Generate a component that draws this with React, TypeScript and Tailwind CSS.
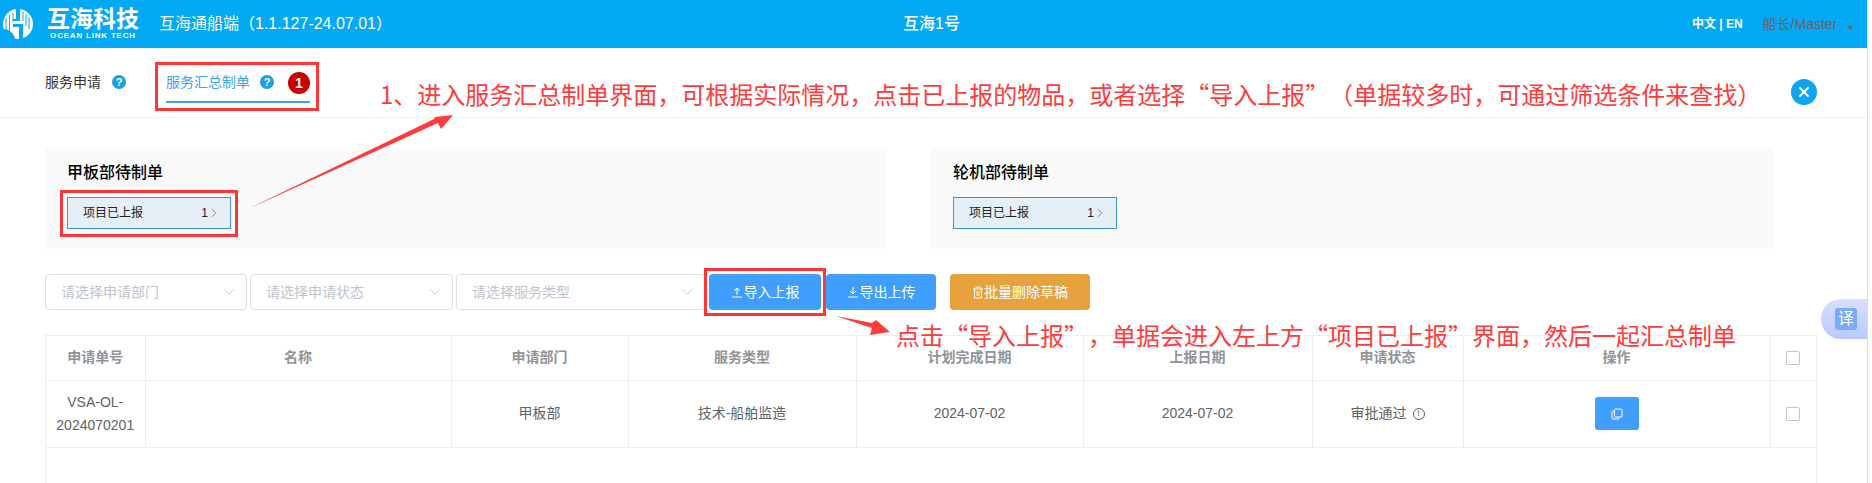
import { ChevronDown, ChevronRight, X } from "lucide-react";

const rows = ["申请单号", "名称", "申请部门", "服务类型", "计划完成日期", "上报日期", "申请状态", "操作"];

function Help() {
  return (
    <span className="flex h-[14px] w-[14px] items-center justify-center rounded-full bg-[#1a9fe8] text-[11px] font-bold leading-none text-white">
      ?
    </span>
  );
}

function Select({ label, width }: { label: string; width: string }) {
  return (
    <div className={`flex h-[36px] items-center justify-between rounded-[4px] border border-[#dcdfe6] pl-[15px] pr-[8px] text-[14px] text-[#c0c4cc] ${width}`}>
      <span>{label}</span>
      <ChevronDown size={18} strokeWidth={1.1} className="text-[#c0c4cc]" />
    </div>
  );
}

function Pending({ title, width }: { title: string; width: string }) {
  return (
    <section className={`h-[101px] bg-[#fafafa] px-[22px] pt-[14px] ${width}`}>
      <h3 className="text-[16px] font-medium leading-[22px] text-black">{title}</h3>
      <div className="mt-[13px] flex h-[32px] w-[164px] items-center justify-between border border-[#3a95dc] bg-[#e4eff8] pl-[15px] pr-[9px] text-[12px] text-[#222]">
        <span>项目已上报</span>
        <span className="flex items-center">
          1<ChevronRight size={14} strokeWidth={1.2} className="-ml-[1px] text-[#555]" />
        </span>
      </div>
    </section>
  );
}

function Check() {
  return <span className="mx-auto block h-[14px] w-[14px] rounded-[2px] border border-[#c0c4cc] bg-white" />;
}

function Logo() {
  return (
    <svg width="32" height="32" viewBox="0 0 32 32" className="ml-[2px] shrink-0">
      <circle cx="16" cy="16" r="15" fill="#fff" />
      <path d="M4 10v12M7.500 7v18M11 5v9" stroke="#03a9f4" strokeWidth="1" fill="none" />
      <path d="M21 4v9M24 6v12M27 9v12" stroke="#03a9f4" strokeWidth="1" fill="none" />
      <path d="M14 1h4v12h-7v-2h3zM11 16h10v15h-4V19h-6z" fill="#03a9f4" />
      <path d="M1 21c5 0 10 3 12 9l-4 1c-4-2-7-6-8-10z" fill="#03a9f4" />
    </svg>
  );
}

export default function App() {
  return (
    <div className="relative flex h-[483px] w-full overflow-hidden bg-white font-['Liberation_Sans','Noto_Sans_CJK_SC',sans-serif]">
      <main className="flex w-[1867px] shrink-0 flex-col">
        <header className="flex h-[48px] shrink-0 items-center whitespace-nowrap bg-[#03a9f4] text-white">
          <Logo />
          <div className="ml-[13px] flex w-[92px] shrink-0 flex-col items-center">
            <span className="text-[23px] font-bold leading-[24px]">互海科技</span>
            <span className="text-[8px] font-bold leading-[10px] tracking-[0.8px]">OCEAN LINK TECH</span>
          </div>
          <span className="ml-[20px] shrink-0 text-[16px]">互海通船端（1.1.127-24.07.01）</span>
          <span className="ml-[511px] shrink-0 text-[16px] font-medium">互海1号</span>
          <span className="ml-[732px] shrink-0 text-[12px] font-bold">中文 | EN</span>
          <span className="ml-[20px] shrink-0 text-[14px] text-[#666]">船长/Master</span>
          <span className="ml-[10px] mt-[8px] h-0 w-0 border-x-[3.500px] border-t-[4px] border-x-transparent border-t-[#666]" />
        </header>

        <nav className="flex h-[70px] shrink-0 items-start border-b border-[#eeeeee] pl-[45px] text-[14px]">
          <div className="flex items-center gap-[11px] pt-[22px] leading-[24px] text-[#333]">
            服务申请 <Help />
          </div>
          <div className="ml-[40px] flex h-[55px] w-[144px] items-start gap-[10px] border-b-2 border-[#409eff] pt-[22px] leading-[24px] text-[#409eff]">
            服务汇总制单
            <span className="mt-[5px]"><Help /></span>
          </div>
        </nav>

        <div className="mt-[30px] flex gap-[44px] pl-[45px]">
          <Pending title="甲板部待制单" width="w-[842px]" />
          <Pending title="轮机部待制单" width="w-[842px]" />
        </div>

        <div className="mt-[25px] flex items-center pl-[45px] text-[14px]">
          <Select label="请选择申请部门" width="w-[202px]" />
          <div className="ml-[3px]"><Select label="请选择申请状态" width="w-[203px]" /></div>
          <div className="ml-[3px]"><Select label="请选择服务类型" width="w-[249px]" /></div>
          <button className="ml-[4px] flex h-[36px] w-[112px] items-center justify-center gap-[1px] rounded-[4px] bg-[#409eff] text-white">
            <svg width="12" height="12" viewBox="0 0 12 12" fill="none" stroke="currentColor"><path d="M6 9V2M3 5l3-3 3 3M1 11h10" /></svg>
            导入上报
          </button>
          <button className="ml-[5px] flex h-[36px] w-[110px] items-center justify-center gap-[1px] rounded-[4px] bg-[#409eff] text-white">
            <svg width="12" height="12" viewBox="0 0 12 12" fill="none" stroke="currentColor"><path d="M6 1v7M3 5l3 3 3-3M1 11h10" /></svg>
            导出上传
          </button>
          <button className="ml-[14px] flex h-[36px] w-[140px] items-center justify-center rounded-[4px] bg-[#e6a23c] text-white">
            <svg width="12" height="13" viewBox="0 0 12 13" fill="none" stroke="currentColor"><path d="M1 3h10M4 3V1h4v2M2.500 3v9h7V3M5 5v5M7 5v5" /></svg>
            批量删除草稿
          </button>
        </div>

        <div className="ml-[45px] mt-[25px] h-[148px] w-[1772px] border-x border-t border-[#ebeef5]">
          <table className="w-full table-fixed border-collapse text-center text-[14px]">
            <colgroup>
              <col className="w-[99px]" />
              <col className="w-[306px]" />
              <col className="w-[177px]" />
              <col className="w-[228px]" />
              <col className="w-[227px]" />
              <col className="w-[229px]" />
              <col className="w-[151px]" />
              <col className="w-[307px]" />
              <col />
            </colgroup>
            <thead>
              <tr className="h-[44px] border-b border-[#ebeef5] font-bold text-[#909399]">
                {rows.map((r) => (
                  <th key={r} className="border-r border-[#ebeef5] font-bold">{r}</th>
                ))}
                <th><Check /></th>
              </tr>
            </thead>
            <tbody className="text-[#606266]">
              <tr className="h-[67px] border-b border-[#ebeef5]">
                <td className="border-r border-[#ebeef5] leading-[23px]">VSA-OL-<br />2024070201</td>
                <td className="border-r border-[#ebeef5]" />
                <td className="border-r border-[#ebeef5]">甲板部</td>
                <td className="border-r border-[#ebeef5]">技术-船舶监造</td>
                <td className="border-r border-[#ebeef5]">2024-07-02</td>
                <td className="border-r border-[#ebeef5]">2024-07-02</td>
                <td className="border-r border-[#ebeef5]">
                  <span className="inline-flex items-center gap-[6px]">
                    审批通过
                    <span className="flex h-[12px] w-[12px] items-center justify-center rounded-full border border-[#606266] text-[9px] leading-none">!</span>
                  </span>
                </td>
                <td className="border-r border-[#ebeef5]">
                  <button className="mx-auto flex h-[33px] w-[44px] items-center justify-center rounded-[3px] bg-[#409eff]">
                    <svg width="12" height="12" viewBox="0 0 12 12" fill="none" stroke="#fff"><rect x="3.500" y="1" width="7.500" height="8" rx="1" /><path d="M3.500 3H2a1 1 0 0 0-1 1v6a1 1 0 0 0 1 1h5a1 1 0 0 0 1-1V9" /></svg>
                  </button>
                </td>
                <td><Check /></td>
              </tr>
            </tbody>
          </table>
        </div>
      </main>

      <div className="h-full w-[5px] border-l border-[#dddddd]" />

      {/* annotations drawn over the page */}
      <div className="absolute left-[155px] top-[62px] h-[49px] w-[164px] border-[3px] border-[#ff3636]" />
      <span className="absolute left-[288px] top-[72px] flex h-[22px] w-[22px] items-center justify-center rounded-full bg-[#c80000] text-[14px] font-bold text-white">1</span>
      <div className="absolute left-[60px] top-[190px] h-[47px] w-[178px] border-[3px] border-[#ff3636]" />
      <div className="absolute left-[704px] top-[268px] h-[48px] w-[122px] border-[3px] border-[#ff3636]" />
      <p className="absolute left-[380px] top-[76px] whitespace-nowrap font-['Noto_Sans_CJK_SC',sans-serif] text-[24px] leading-[36px] text-[#ff3b3b] [text-spacing-trim:space-all]">
        1、进入服务汇总制单界面，可根据实际情况，点击已上报的物品，或者选择“导入上报”（单据较多时，可通过筛选条件来查找）
      </p>
      <p className="absolute left-[896px] top-[317px] whitespace-nowrap font-['Noto_Sans_CJK_SC',sans-serif] text-[24px] leading-[36px] text-[#ff3b3b] [text-spacing-trim:space-all]">
        点击“导入上报”，单据会进入左上方“项目已上报”界面，然后一起汇总制单
      </p>
      <svg className="absolute left-0 top-0" width="1872" height="483" fill="#ff3b3b">
        <path d="M250 208 434 119 435 117 453 115 441 129 438 123z" />
        <path d="M836 316 872 323 876 320 890 332 870 335 872 328z" />
      </svg>
      <span className="absolute left-[1791px] top-[79px] flex h-[26px] w-[26px] items-center justify-center rounded-full bg-[#0ea5ee] text-white">
        <X size={16} strokeWidth={3} />
      </span>
      <div className="absolute left-[1821px] top-[299px] flex h-[40px] w-[46px] items-center rounded-l-[20px] bg-gradient-to-b from-[#d9deff] to-[#b9c9ff] pl-[14px]">
        <span className="flex h-[22px] w-[22px] items-center justify-center rounded-[3px] bg-[#7baaf7] text-[16px] text-white">译</span>
      </div>
    </div>
  );
}
